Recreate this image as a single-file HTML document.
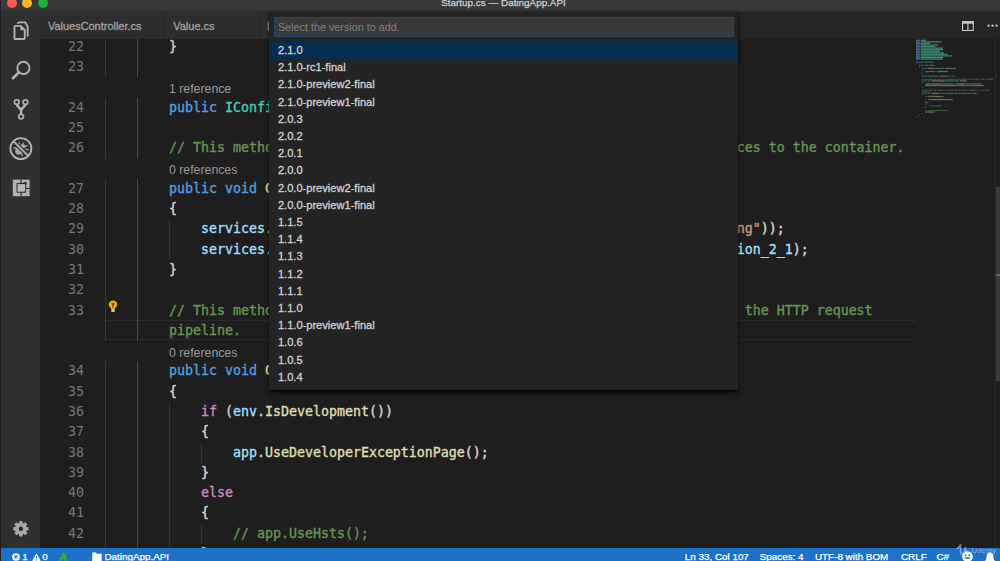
<!DOCTYPE html>
<html lang="en">
<head>
<meta charset="utf-8">
<title>Startup.cs — DatingApp.API</title>
<style>
*{box-sizing:border-box;margin:0;padding:0}
html,body{width:1000px;height:561px;overflow:hidden;background:#1e1e1e}
body{position:relative;font-family:"Liberation Sans",sans-serif;color:#d4d4d4;-webkit-font-smoothing:antialiased}
.abs{position:absolute}
#edge{left:0;top:0;width:1.400px;height:561px;background:#241f1e;z-index:50}
#titlebar{left:0;top:0;width:1000px;height:12px;background:linear-gradient(#3a3a3a 0,#383838 9px,#303030 12px);overflow:hidden}
#titlebar .tl{position:absolute;top:-2.100px;width:10px;height:10px;border-radius:50%}
#title{left:439.5px;top:-4.2px;width:128px;text-align:center;font-size:9.9px;line-height:14px;color:#d2d2d2;white-space:nowrap;-webkit-text-stroke:0.25px #d2d2d2}
#activity{left:1.400px;top:12px;width:38.600px;height:536px;background:#2f2f2f}
#tabs{left:40px;top:12px;width:960px;height:27px;background:#252526}
.tab{position:absolute;top:0;height:27px;background:#2d2d2d;color:#a2a2a2;font-size:10.95px;line-height:28.5px;-webkit-text-stroke:0.3px #a2a2a2;white-space:nowrap;border-right:1px solid #252526}
#editor{left:40px;top:39px;width:960px;height:509px;background:#1e1e1e;overflow:hidden}
.ln{position:absolute;left:0;width:44px;text-align:right;color:#777777;font:13.29px/20.29px "DejaVu Sans Mono","Liberation Mono",monospace;height:20.29px;white-space:pre}
.cl{position:absolute;left:65px;color:#d4d4d4;-webkit-text-stroke-width:0.4px;font:13.29px/20.29px "DejaVu Sans Mono","Liberation Mono",monospace;height:20.29px;white-space:pre}
.lens{position:absolute;left:129px;color:#999999;font:12.3px/20.29px "Liberation Sans",sans-serif;height:20.29px;white-space:pre}
.k{color:#509de0}.t{color:#48ccb2}.c{color:#64944f}.v{color:#9cdcfe}.f{color:#dcdcaa}.p{color:#c586c0}.s{color:#ce9178}
.g{position:absolute;width:1px;background:#404040}
#status{left:0;top:547.7px;width:1000px;height:14px;background:#1b72c8;color:#fff;font-size:9.85px;line-height:17.2px;white-space:nowrap;overflow:hidden;-webkit-text-stroke:0.25px #fff}
#status span{position:absolute;top:0}
#qo{left:269.400px;top:12px;width:468.800px;height:377.600px;background:#242425;box-shadow:0 4px 5px -1.500px rgba(0,0,0,.95),0 0 2.500px rgba(0,0,0,.55);z-index:20}
#qin{left:4.5px;top:4.5px;width:460px;height:20.5px;background:#393939;border:1px solid #1a4a70;color:#808080;font-size:10.8px;line-height:18.5px;padding-left:3px;white-space:nowrap}
.row{position:absolute;left:0;width:468.5px;height:17.2px;padding-left:8.5px;font-size:11.1px;line-height:17.2px;color:#d2d2d2;white-space:nowrap;-webkit-text-stroke:0.3px #d2d2d2}
.row.sel{background:#062e50}
</style>
</head>
<body>
<div id="titlebar" class="abs">
  <div class="tl" style="left:6.5px;background:#fc5b50"></div>
  <div class="tl" style="left:22px;background:#fdb72a"></div>
  <div class="tl" style="left:38px;background:#1cb23a"></div>
  <div id="title" class="abs">Startup.cs — DatingApp.API</div>
</div>
<div id="edge" class="abs"></div>
<div id="activity" class="abs">
<svg class="abs" style="left:0.300px;top:0" width="38.5" height="536" viewBox="0 0 38.5 536" fill="none" stroke="#b2b2b2">
<!-- files -->
<path d="M13.6 13.85H18.6L22.75 18V25.9a1.15 1.15 0 0 1-1.15 1.15H13.6a1.15 1.15 0 0 1-1.15-1.15V15a1.15 1.15 0 0 1 1.15-1.15z" stroke-width="1.9" stroke-linejoin="round"/>
<path d="M18.4 14v4.2h4.2z" fill="#b2b2b2" stroke="none"/>
<path d="M15.6 11.6c0.300-0.800 0.900-1.200 1.700-1.200h5.900l2.450 4.000V24.400" stroke-width="1.900" stroke-linejoin="miter"/>
<!-- search -->
<circle cx="21.4" cy="55.9" r="6.1" stroke-width="1.9"/>
<path d="M16.600 60.700L10.900 66.300" stroke-width="2.700" stroke-linecap="round"/>
<!-- git -->
<circle cx="14.700" cy="90.100" r="2.350" stroke-width="1.700"/>
<circle cx="23.500" cy="90.100" r="2.350" stroke-width="1.700"/>
<circle cx="19.100" cy="104.600" r="2.350" stroke-width="1.700"/>
<path d="M14.900 92.600c0.300 2.400 4.200 3.400 4.200 6.200v3.400M23.300 92.600c-0.300 2.400-4.200 3.400-4.200 6.200" stroke-width="2.500" stroke-linejoin="round"/>
<!-- debug -->
<circle cx="18.870" cy="136.600" r="10.500" stroke-width="1.900"/>
<g stroke="none" fill="#a6a6a6">
<ellipse cx="16.700" cy="138.800" rx="3.500" ry="3.900"/>
<ellipse cx="20.800" cy="134.600" rx="2.600" ry="2.300"/>
</g>
<path d="M11.200 136.500c1.600-1.200 3.000-0.800 4.000 0.200M18.800 141.000c1.600 0.800 1.700 2.200 1.200 3.600M16.800 130.000l0.800 3.200M21.400 130.600l-0.600 2.600M25.400 133.400l-2.600 1.400M26.600 137.800l-3.400-0.600M24.600 141.600l-2.400-1.800" stroke="#a6a6a6" stroke-width="1.200"/>
<path d="M13.000 130.900L24.700 142.300" stroke="#2f2f2f" stroke-width="4.200"/>
<path d="M11.600 129.400L26.100 143.700" stroke-width="1.900"/>
<!-- extensions -->
<g stroke="none">
<rect x="10.800" y="167.600" width="16.800" height="16.600" fill="#b2b2b2"/>
<rect x="18.500" y="167.600" width="1.200" height="16.600" fill="#2f2f2f"/>
<rect x="23.000" y="175.900" width="4.600" height="1.100" fill="#2f2f2f"/>
<rect x="14.500" y="171.100" width="9.600" height="9.600" rx="0.800" fill="#2f2f2f"/>
<rect x="21.600" y="170.100" width="3.000" height="2.600" fill="#2a2a2a"/>
<rect x="15.500" y="172.100" width="7.600" height="7.600" fill="#b8b8b8"/>
</g>
<!-- gear -->
<g transform="translate(18.870 516.700)" stroke="none" fill="#a8a8a8">
<circle r="5.700"/>
<g id="tooth"><path d="M-1.500 -7.700h3l0.500 3h-4z"/></g>
<path d="M-1.500 -7.700h3l0.500 3h-4z" transform="rotate(45)"/>
<path d="M-1.500 -7.700h3l0.500 3h-4z" transform="rotate(90)"/>
<path d="M-1.500 -7.700h3l0.500 3h-4z" transform="rotate(135)"/>
<path d="M-1.500 -7.700h3l0.500 3h-4z" transform="rotate(180)"/>
<path d="M-1.500 -7.700h3l0.500 3h-4z" transform="rotate(225)"/>
<path d="M-1.500 -7.700h3l0.500 3h-4z" transform="rotate(270)"/>
<path d="M-1.500 -7.700h3l0.500 3h-4z" transform="rotate(315)"/>
<circle r="2.200" fill="#2c2c2c"/>
</g>
</svg>
</div>
<div id="tabs" class="abs">
  <div class="tab" style="left:0;width:125px;padding-left:8px">ValuesController.cs</div>
  <div class="tab" style="left:125px;width:94.500px;padding-left:8.300px">Value.cs</div>
  <div class="tab" style="left:219.500px;width:110px;padding-left:7.500px">DataContext.cs</div>

<svg class="abs" style="left:922px;top:8.8px" width="11.800" height="10.200" viewBox="0 0 13 11"><rect x="0.600" y="0.600" width="11.800" height="9.800" fill="none" stroke="#d0d0d0" stroke-width="1.200"/><rect x="0.600" y="0.600" width="11.800" height="2.200" fill="#d0d0d0"/><path d="M6.500 1v9.400" stroke="#d0d0d0" stroke-width="1.200"/></svg>
<svg class="abs" style="left:947px;top:12px" width="12" height="4" viewBox="0 0 12 4"><circle cx="1.500" cy="1.700" r="1.150" fill="#d0d0d0"/><circle cx="5.500" cy="1.700" r="1.150" fill="#d0d0d0"/><circle cx="9.500" cy="1.700" r="1.150" fill="#d0d0d0"/></svg>

</div>
<div id="editor" class="abs"><div class="abs" style="left:65px;top:280.66px;width:811px;height:19.89px;border-top:1.500px solid #2a2a2a;border-bottom:1.500px solid #2a2a2a"></div>
<div class="g" style="left:65.0px;top:-2.20px;height:40.58px;background:#383838"></div>
<div class="g" style="left:97.0px;top:-2.20px;height:40.58px;background:#4a4a4a"></div>
<div class="g" style="left:65.0px;top:58.67px;height:60.87px;background:#383838"></div>
<div class="g" style="left:97.0px;top:58.67px;height:60.87px;background:#4a4a4a"></div>
<div class="g" style="left:65.0px;top:139.83px;height:162.32px;background:#383838"></div>
<div class="g" style="left:97.0px;top:139.83px;height:162.32px;background:#4a4a4a"></div>
<div class="g" style="left:65.0px;top:322.44px;height:202.90px;background:#383838"></div>
<div class="g" style="left:97.0px;top:322.44px;height:202.90px;background:#4a4a4a"></div>
<div class="g" style="left:129.0px;top:180.41px;height:40.58px;background:#333333"></div>
<div class="g" style="left:129.0px;top:363.02px;height:162.32px;background:#333333"></div>
<div class="g" style="left:161.0px;top:403.60px;height:20.29px;background:#333333"></div>
<div class="g" style="left:161.0px;top:484.76px;height:20.29px;background:#333333"></div>
<div class="ln" style="top:-2.20px">22</div>
<div class="cl" style="top:-2.20px">        }</div>
<div class="ln" style="top:18.09px">23</div>
<div class="lens" style="top:39.88px">1 reference</div>
<div class="ln" style="top:58.67px">24</div>
<div class="cl" style="top:58.67px">        <span class="k">public</span> <span class="t">IConfiguration</span> Configuration { <span class="k">get</span>; }</div>
<div class="ln" style="top:78.96px">25</div>
<div class="ln" style="top:99.25px">26</div>
<div class="cl" style="top:99.25px">        <span class="c">// This method gets called by the runtime. Use this method to add services to the container.</span></div>
<div class="lens" style="top:121.04px">0 references</div>
<div class="ln" style="top:139.83px">27</div>
<div class="cl" style="top:139.83px">        <span class="k">public</span> <span class="k">void</span> <span class="f">ConfigureServices</span>(<span class="t">IServiceCollection</span> <span class="v">services</span>)</div>
<div class="ln" style="top:160.12px">28</div>
<div class="cl" style="top:160.12px">        {</div>
<div class="ln" style="top:180.41px">29</div>
<div class="cl" style="top:180.41px">            <span class="v">services</span>.<span class="f">AddDbContext</span>&lt;<span class="t">DataContext</span>&gt;(<span class="v">x</span> =&gt; <span class="v">x</span>.<span class="f">UseSqlite</span>(<span class="s">"ConnectionString"</span>));</div>
<div class="ln" style="top:200.70px">30</div>
<div class="cl" style="top:200.70px">            <span class="v">services</span>.<span class="f">AddMvc</span>().<span class="f">SetCompatibilityVersion</span>(<span class="t">CompatibilityVersion</span>.<span class="v">Version_2_1</span>);</div>
<div class="ln" style="top:220.99px">31</div>
<div class="cl" style="top:220.99px">        }</div>
<div class="ln" style="top:241.28px">32</div>
<div class="ln" style="top:261.57px">33</div>
<div class="cl" style="top:261.57px">        <span class="c">// This method gets called by the runtime. Use this method to configure the HTTP request </span></div>
<div class="cl" style="top:281.86px">        <span class="c">pipeline.</span></div>
<div class="lens" style="top:303.65px">0 references</div>
<div class="ln" style="top:322.44px">34</div>
<div class="cl" style="top:322.44px">        <span class="k">public</span> <span class="k">void</span> <span class="f">Configure</span>(<span class="t">IApplicationBuilder</span> <span class="v">app</span>, <span class="t">IHostingEnvironment</span> <span class="v">env</span>)</div>
<div class="ln" style="top:342.73px">35</div>
<div class="cl" style="top:342.73px">        {</div>
<div class="ln" style="top:363.02px">36</div>
<div class="cl" style="top:363.02px">            <span class="p">if</span> (<span class="v">env</span>.<span class="f">IsDevelopment</span>())</div>
<div class="ln" style="top:383.31px">37</div>
<div class="cl" style="top:383.31px">            {</div>
<div class="ln" style="top:403.60px">38</div>
<div class="cl" style="top:403.60px">                <span class="v">app</span>.<span class="f">UseDeveloperExceptionPage</span>();</div>
<div class="ln" style="top:423.89px">39</div>
<div class="cl" style="top:423.89px">            }</div>
<div class="ln" style="top:444.18px">40</div>
<div class="cl" style="top:444.18px">            <span class="p">else</span></div>
<div class="ln" style="top:464.47px">41</div>
<div class="cl" style="top:464.47px">            {</div>
<div class="ln" style="top:484.76px">42</div>
<div class="cl" style="top:484.76px">                <span class="c">// app.UseHsts();</span></div>
<div class="ln" style="top:505.05px">43</div>
<div class="cl" style="top:505.05px">            }</div>
<svg class="abs" style="left:68.400px;top:260.600px" width="10" height="13" viewBox="0 0 10 13"><path d="M5 0.400C2.500 0.400 0.700 2.200 0.700 4.400c0 1.500 0.800 2.300 1.500 3.200 0.500 0.600 0.800 1 0.900 1.500h3.800c0.100-0.500 0.400-0.900 0.900-1.500 0.700-0.900 1.500-1.700 1.500-3.200C9.300 2.200 7.500 0.400 5 0.400z" fill="#e6a91e"/><path d="M3.300 3.300h3.400L5 6.400z" fill="#4a3300"/><path d="M5 5.600v2.600" stroke="#7a5800" stroke-width="0.800"/><rect x="3.300" y="9.100" width="3.400" height="3" rx="0.500" fill="#c4c4c4"/></svg>
<svg class="abs" style="left:876.3px;top:0" width="80" height="90" viewBox="0 0 80 90"><rect x="0.00" y="0.70" width="3.85" height="1.25" fill="#569cd6" opacity="0.62"/><rect x="4.62" y="0.70" width="4.62" height="1.25" fill="#4ec9b0" opacity="0.62"/><rect x="9.24" y="0.70" width="0.77" height="1.25" fill="#d4d4d4" opacity="0.50"/><rect x="0.00" y="2.26" width="3.85" height="1.25" fill="#569cd6" opacity="0.62"/><rect x="4.62" y="2.26" width="20.02" height="1.25" fill="#4ec9b0" opacity="0.62"/><rect x="24.64" y="2.26" width="0.77" height="1.25" fill="#d4d4d4" opacity="0.50"/><rect x="0.00" y="3.82" width="3.85" height="1.25" fill="#569cd6" opacity="0.62"/><rect x="4.62" y="3.82" width="8.47" height="1.25" fill="#4ec9b0" opacity="0.62"/><rect x="13.09" y="3.82" width="0.77" height="1.25" fill="#d4d4d4" opacity="0.50"/><rect x="0.00" y="5.38" width="3.85" height="1.25" fill="#569cd6" opacity="0.62"/><rect x="4.62" y="5.38" width="16.94" height="1.25" fill="#4ec9b0" opacity="0.62"/><rect x="21.56" y="5.38" width="0.77" height="1.25" fill="#d4d4d4" opacity="0.50"/><rect x="0.00" y="6.94" width="3.85" height="1.25" fill="#569cd6" opacity="0.62"/><rect x="4.62" y="6.94" width="13.86" height="1.25" fill="#4ec9b0" opacity="0.62"/><rect x="18.48" y="6.94" width="0.77" height="1.25" fill="#d4d4d4" opacity="0.50"/><rect x="0.00" y="8.50" width="3.85" height="1.25" fill="#569cd6" opacity="0.62"/><rect x="4.62" y="8.50" width="21.56" height="1.25" fill="#4ec9b0" opacity="0.62"/><rect x="26.18" y="8.50" width="0.77" height="1.25" fill="#d4d4d4" opacity="0.50"/><rect x="0.00" y="10.06" width="3.85" height="1.25" fill="#569cd6" opacity="0.62"/><rect x="4.62" y="10.06" width="21.56" height="1.25" fill="#4ec9b0" opacity="0.62"/><rect x="26.18" y="10.06" width="0.77" height="1.25" fill="#d4d4d4" opacity="0.50"/><rect x="0.00" y="11.62" width="3.85" height="1.25" fill="#569cd6" opacity="0.62"/><rect x="4.62" y="11.62" width="18.48" height="1.25" fill="#4ec9b0" opacity="0.62"/><rect x="23.10" y="11.62" width="0.77" height="1.25" fill="#d4d4d4" opacity="0.50"/><rect x="0.00" y="13.18" width="3.85" height="1.25" fill="#569cd6" opacity="0.62"/><rect x="4.62" y="13.18" width="22.33" height="1.25" fill="#4ec9b0" opacity="0.62"/><rect x="26.95" y="13.18" width="0.77" height="1.25" fill="#d4d4d4" opacity="0.50"/><rect x="0.00" y="14.74" width="3.85" height="1.25" fill="#569cd6" opacity="0.62"/><rect x="4.62" y="14.74" width="26.18" height="1.25" fill="#4ec9b0" opacity="0.62"/><rect x="30.80" y="14.74" width="0.77" height="1.25" fill="#d4d4d4" opacity="0.50"/><rect x="0.00" y="16.30" width="3.85" height="1.25" fill="#569cd6" opacity="0.62"/><rect x="4.62" y="16.30" width="30.80" height="1.25" fill="#4ec9b0" opacity="0.62"/><rect x="35.42" y="16.30" width="0.77" height="1.25" fill="#d4d4d4" opacity="0.50"/><rect x="0.00" y="17.86" width="3.85" height="1.25" fill="#569cd6" opacity="0.62"/><rect x="4.62" y="17.86" width="21.56" height="1.25" fill="#4ec9b0" opacity="0.62"/><rect x="26.18" y="17.86" width="0.77" height="1.25" fill="#d4d4d4" opacity="0.50"/><rect x="0.00" y="19.42" width="3.85" height="1.25" fill="#569cd6" opacity="0.62"/><rect x="4.62" y="19.42" width="21.56" height="1.25" fill="#4ec9b0" opacity="0.62"/><rect x="26.18" y="19.42" width="0.77" height="1.25" fill="#d4d4d4" opacity="0.50"/><rect x="0.00" y="22.54" width="6.93" height="1.25" fill="#569cd6" opacity="0.42"/><rect x="7.70" y="22.54" width="10.01" height="1.25" fill="#4ec9b0" opacity="0.42"/><rect x="0.00" y="24.10" width="0.77" height="1.25" fill="#d4d4d4" opacity="0.34"/><rect x="3.08" y="25.66" width="4.62" height="1.25" fill="#569cd6" opacity="0.42"/><rect x="8.47" y="25.66" width="3.85" height="1.25" fill="#569cd6" opacity="0.42"/><rect x="13.09" y="25.66" width="5.39" height="1.25" fill="#4ec9b0" opacity="0.42"/><rect x="3.08" y="27.22" width="0.77" height="1.25" fill="#d4d4d4" opacity="0.34"/><rect x="6.16" y="28.78" width="4.62" height="1.25" fill="#569cd6" opacity="0.42"/><rect x="11.55" y="28.78" width="5.39" height="1.25" fill="#dcdcaa" opacity="0.42"/><rect x="16.94" y="28.78" width="0.77" height="1.25" fill="#d4d4d4" opacity="0.34"/><rect x="17.71" y="28.78" width="10.78" height="1.25" fill="#4ec9b0" opacity="0.42"/><rect x="29.26" y="28.78" width="10.01" height="1.25" fill="#9cdcfe" opacity="0.42"/><rect x="39.27" y="28.78" width="0.77" height="1.25" fill="#d4d4d4" opacity="0.34"/><rect x="6.16" y="30.34" width="0.77" height="1.25" fill="#d4d4d4" opacity="0.34"/><rect x="9.24" y="31.90" width="10.01" height="1.25" fill="#d4d4d4" opacity="0.34"/><rect x="20.02" y="31.90" width="0.77" height="1.25" fill="#d4d4d4" opacity="0.34"/><rect x="21.56" y="31.90" width="10.01" height="1.25" fill="#9cdcfe" opacity="0.42"/><rect x="31.57" y="31.90" width="0.77" height="1.25" fill="#d4d4d4" opacity="0.34"/><rect x="6.16" y="33.46" width="0.77" height="1.25" fill="#d4d4d4" opacity="0.34"/><rect x="6.16" y="36.58" width="4.62" height="1.25" fill="#569cd6" opacity="0.42"/><rect x="11.55" y="36.58" width="10.78" height="1.25" fill="#4ec9b0" opacity="0.42"/><rect x="23.10" y="36.58" width="10.01" height="1.25" fill="#d4d4d4" opacity="0.34"/><rect x="33.88" y="36.58" width="0.77" height="1.25" fill="#d4d4d4" opacity="0.34"/><rect x="35.42" y="36.58" width="2.31" height="1.25" fill="#569cd6" opacity="0.42"/><rect x="37.73" y="36.58" width="0.77" height="1.25" fill="#d4d4d4" opacity="0.34"/><rect x="39.27" y="36.58" width="0.77" height="1.25" fill="#d4d4d4" opacity="0.34"/><rect x="6.16" y="39.70" width="1.54" height="1.25" fill="#6a9955" opacity="0.42"/><rect x="8.47" y="39.70" width="3.08" height="1.25" fill="#6a9955" opacity="0.42"/><rect x="12.32" y="39.70" width="4.62" height="1.25" fill="#6a9955" opacity="0.42"/><rect x="17.71" y="39.70" width="3.08" height="1.25" fill="#6a9955" opacity="0.42"/><rect x="21.56" y="39.70" width="4.62" height="1.25" fill="#6a9955" opacity="0.42"/><rect x="26.95" y="39.70" width="1.54" height="1.25" fill="#6a9955" opacity="0.42"/><rect x="29.26" y="39.70" width="2.31" height="1.25" fill="#6a9955" opacity="0.42"/><rect x="32.34" y="39.70" width="6.16" height="1.25" fill="#6a9955" opacity="0.42"/><rect x="39.27" y="39.70" width="2.31" height="1.25" fill="#6a9955" opacity="0.42"/><rect x="42.35" y="39.70" width="3.08" height="1.25" fill="#6a9955" opacity="0.42"/><rect x="46.20" y="39.70" width="4.62" height="1.25" fill="#6a9955" opacity="0.42"/><rect x="51.59" y="39.70" width="1.54" height="1.25" fill="#6a9955" opacity="0.42"/><rect x="53.90" y="39.70" width="2.31" height="1.25" fill="#6a9955" opacity="0.42"/><rect x="56.98" y="39.70" width="6.16" height="1.25" fill="#6a9955" opacity="0.42"/><rect x="63.91" y="39.70" width="1.54" height="1.25" fill="#6a9955" opacity="0.42"/><rect x="66.22" y="39.70" width="2.31" height="1.25" fill="#6a9955" opacity="0.42"/><rect x="69.30" y="39.70" width="7.70" height="1.25" fill="#6a9955" opacity="0.42"/><rect x="6.16" y="41.26" width="4.62" height="1.25" fill="#569cd6" opacity="0.42"/><rect x="11.55" y="41.26" width="3.08" height="1.25" fill="#569cd6" opacity="0.42"/><rect x="15.40" y="41.26" width="13.09" height="1.25" fill="#dcdcaa" opacity="0.42"/><rect x="28.49" y="41.26" width="0.77" height="1.25" fill="#d4d4d4" opacity="0.34"/><rect x="29.26" y="41.26" width="13.86" height="1.25" fill="#4ec9b0" opacity="0.42"/><rect x="43.89" y="41.26" width="6.16" height="1.25" fill="#9cdcfe" opacity="0.42"/><rect x="50.05" y="41.26" width="0.77" height="1.25" fill="#d4d4d4" opacity="0.34"/><rect x="6.16" y="42.82" width="0.77" height="1.25" fill="#d4d4d4" opacity="0.34"/><rect x="9.24" y="44.38" width="6.16" height="1.25" fill="#9cdcfe" opacity="0.42"/><rect x="15.40" y="44.38" width="0.77" height="1.25" fill="#d4d4d4" opacity="0.34"/><rect x="16.17" y="44.38" width="9.24" height="1.25" fill="#dcdcaa" opacity="0.42"/><rect x="25.41" y="44.38" width="0.77" height="1.25" fill="#d4d4d4" opacity="0.34"/><rect x="26.18" y="44.38" width="8.47" height="1.25" fill="#4ec9b0" opacity="0.42"/><rect x="34.65" y="44.38" width="1.54" height="1.25" fill="#d4d4d4" opacity="0.34"/><rect x="36.19" y="44.38" width="0.77" height="1.25" fill="#9cdcfe" opacity="0.42"/><rect x="37.73" y="44.38" width="1.54" height="1.25" fill="#d4d4d4" opacity="0.34"/><rect x="40.04" y="44.38" width="0.77" height="1.25" fill="#9cdcfe" opacity="0.42"/><rect x="40.81" y="44.38" width="0.77" height="1.25" fill="#d4d4d4" opacity="0.34"/><rect x="41.58" y="44.38" width="6.93" height="1.25" fill="#dcdcaa" opacity="0.42"/><rect x="48.51" y="44.38" width="0.77" height="1.25" fill="#d4d4d4" opacity="0.34"/><rect x="49.28" y="44.38" width="13.86" height="1.25" fill="#ce9178" opacity="0.42"/><rect x="63.14" y="44.38" width="2.31" height="1.25" fill="#d4d4d4" opacity="0.34"/><rect x="9.24" y="45.94" width="6.16" height="1.25" fill="#9cdcfe" opacity="0.42"/><rect x="15.40" y="45.94" width="0.77" height="1.25" fill="#d4d4d4" opacity="0.34"/><rect x="16.17" y="45.94" width="4.62" height="1.25" fill="#dcdcaa" opacity="0.42"/><rect x="20.79" y="45.94" width="2.31" height="1.25" fill="#d4d4d4" opacity="0.34"/><rect x="23.10" y="45.94" width="17.71" height="1.25" fill="#dcdcaa" opacity="0.42"/><rect x="40.81" y="45.94" width="0.77" height="1.25" fill="#d4d4d4" opacity="0.34"/><rect x="41.58" y="45.94" width="15.40" height="1.25" fill="#4ec9b0" opacity="0.42"/><rect x="56.98" y="45.94" width="0.77" height="1.25" fill="#d4d4d4" opacity="0.34"/><rect x="57.75" y="45.94" width="8.47" height="1.25" fill="#9cdcfe" opacity="0.42"/><rect x="66.22" y="45.94" width="1.54" height="1.25" fill="#d4d4d4" opacity="0.34"/><rect x="6.16" y="47.50" width="0.77" height="1.25" fill="#d4d4d4" opacity="0.34"/><rect x="6.16" y="50.62" width="1.54" height="1.25" fill="#6a9955" opacity="0.42"/><rect x="8.47" y="50.62" width="3.08" height="1.25" fill="#6a9955" opacity="0.42"/><rect x="12.32" y="50.62" width="4.62" height="1.25" fill="#6a9955" opacity="0.42"/><rect x="17.71" y="50.62" width="3.08" height="1.25" fill="#6a9955" opacity="0.42"/><rect x="21.56" y="50.62" width="4.62" height="1.25" fill="#6a9955" opacity="0.42"/><rect x="26.95" y="50.62" width="1.54" height="1.25" fill="#6a9955" opacity="0.42"/><rect x="29.26" y="50.62" width="2.31" height="1.25" fill="#6a9955" opacity="0.42"/><rect x="32.34" y="50.62" width="6.16" height="1.25" fill="#6a9955" opacity="0.42"/><rect x="39.27" y="50.62" width="2.31" height="1.25" fill="#6a9955" opacity="0.42"/><rect x="42.35" y="50.62" width="3.08" height="1.25" fill="#6a9955" opacity="0.42"/><rect x="46.20" y="50.62" width="4.62" height="1.25" fill="#6a9955" opacity="0.42"/><rect x="51.59" y="50.62" width="1.54" height="1.25" fill="#6a9955" opacity="0.42"/><rect x="53.90" y="50.62" width="6.93" height="1.25" fill="#6a9955" opacity="0.42"/><rect x="61.60" y="50.62" width="2.31" height="1.25" fill="#6a9955" opacity="0.42"/><rect x="64.68" y="50.62" width="3.08" height="1.25" fill="#6a9955" opacity="0.42"/><rect x="68.53" y="50.62" width="5.39" height="1.25" fill="#6a9955" opacity="0.42"/><rect x="6.16" y="52.18" width="6.93" height="1.25" fill="#6a9955" opacity="0.42"/><rect x="6.16" y="53.74" width="4.62" height="1.25" fill="#569cd6" opacity="0.42"/><rect x="11.55" y="53.74" width="3.08" height="1.25" fill="#569cd6" opacity="0.42"/><rect x="15.40" y="53.74" width="6.93" height="1.25" fill="#dcdcaa" opacity="0.42"/><rect x="22.33" y="53.74" width="0.77" height="1.25" fill="#d4d4d4" opacity="0.34"/><rect x="23.10" y="53.74" width="14.63" height="1.25" fill="#4ec9b0" opacity="0.42"/><rect x="38.50" y="53.74" width="2.31" height="1.25" fill="#9cdcfe" opacity="0.42"/><rect x="40.81" y="53.74" width="0.77" height="1.25" fill="#d4d4d4" opacity="0.34"/><rect x="42.35" y="53.74" width="14.63" height="1.25" fill="#4ec9b0" opacity="0.42"/><rect x="57.75" y="53.74" width="2.31" height="1.25" fill="#9cdcfe" opacity="0.42"/><rect x="60.06" y="53.74" width="0.77" height="1.25" fill="#d4d4d4" opacity="0.34"/><rect x="6.16" y="55.30" width="0.77" height="1.25" fill="#d4d4d4" opacity="0.34"/><rect x="9.24" y="56.86" width="1.54" height="1.25" fill="#c586c0" opacity="0.42"/><rect x="11.55" y="56.86" width="0.77" height="1.25" fill="#d4d4d4" opacity="0.34"/><rect x="12.32" y="56.86" width="2.31" height="1.25" fill="#9cdcfe" opacity="0.42"/><rect x="14.63" y="56.86" width="0.77" height="1.25" fill="#d4d4d4" opacity="0.34"/><rect x="15.40" y="56.86" width="10.01" height="1.25" fill="#dcdcaa" opacity="0.42"/><rect x="25.41" y="56.86" width="2.31" height="1.25" fill="#d4d4d4" opacity="0.34"/><rect x="9.24" y="58.42" width="0.77" height="1.25" fill="#d4d4d4" opacity="0.34"/><rect x="12.32" y="59.98" width="2.31" height="1.25" fill="#9cdcfe" opacity="0.42"/><rect x="14.63" y="59.98" width="0.77" height="1.25" fill="#d4d4d4" opacity="0.34"/><rect x="15.40" y="59.98" width="19.25" height="1.25" fill="#dcdcaa" opacity="0.42"/><rect x="34.65" y="59.98" width="2.31" height="1.25" fill="#d4d4d4" opacity="0.34"/><rect x="9.24" y="61.54" width="0.77" height="1.25" fill="#d4d4d4" opacity="0.34"/><rect x="9.24" y="63.10" width="3.08" height="1.25" fill="#c586c0" opacity="0.42"/><rect x="9.24" y="64.66" width="0.77" height="1.25" fill="#d4d4d4" opacity="0.34"/><rect x="12.32" y="66.22" width="1.54" height="1.25" fill="#6a9955" opacity="0.42"/><rect x="14.63" y="66.22" width="10.78" height="1.25" fill="#6a9955" opacity="0.42"/><rect x="9.24" y="67.78" width="0.77" height="1.25" fill="#d4d4d4" opacity="0.34"/><rect x="9.24" y="70.90" width="1.54" height="1.25" fill="#6a9955" opacity="0.42"/><rect x="11.55" y="70.90" width="20.02" height="1.25" fill="#6a9955" opacity="0.42"/><rect x="9.24" y="72.46" width="2.31" height="1.25" fill="#9cdcfe" opacity="0.42"/><rect x="11.55" y="72.46" width="0.77" height="1.25" fill="#d4d4d4" opacity="0.34"/><rect x="12.32" y="72.46" width="4.62" height="1.25" fill="#dcdcaa" opacity="0.42"/><rect x="16.94" y="72.46" width="2.31" height="1.25" fill="#d4d4d4" opacity="0.34"/><rect x="6.16" y="74.02" width="0.77" height="1.25" fill="#d4d4d4" opacity="0.34"/><rect x="3.08" y="75.58" width="0.77" height="1.25" fill="#d4d4d4" opacity="0.34"/><rect x="0.00" y="77.14" width="0.77" height="1.25" fill="#d4d4d4" opacity="0.34"/></svg>
<div class="abs" style="left:955px;top:0;width:1px;height:509px;background:#2a2a2a"></div>
<div class="abs" style="left:955.5px;top:148px;width:5px;height:194px;background:#3a3a3a"></div>
<div class="abs" style="left:955.5px;top:235px;width:5px;height:1.5px;background:#6a6a6a"></div></div>
<div id="qo" class="abs">
  <div id="qin" class="abs">Select the version to add.</div>
<div class="row sel" style="top:29.90px">2.1.0</div>
<div class="row" style="top:47.10px">2.1.0-rc1-final</div>
<div class="row" style="top:64.30px">2.1.0-preview2-final</div>
<div class="row" style="top:81.50px">2.1.0-preview1-final</div>
<div class="row" style="top:98.70px">2.0.3</div>
<div class="row" style="top:115.90px">2.0.2</div>
<div class="row" style="top:133.10px">2.0.1</div>
<div class="row" style="top:150.30px">2.0.0</div>
<div class="row" style="top:167.50px">2.0.0-preview2-final</div>
<div class="row" style="top:184.70px">2.0.0-preview1-final</div>
<div class="row" style="top:201.90px">1.1.5</div>
<div class="row" style="top:219.10px">1.1.4</div>
<div class="row" style="top:236.30px">1.1.3</div>
<div class="row" style="top:253.50px">1.1.2</div>
<div class="row" style="top:270.70px">1.1.1</div>
<div class="row" style="top:287.90px">1.1.0</div>
<div class="row" style="top:305.10px">1.1.0-preview1-final</div>
<div class="row" style="top:322.30px">1.0.6</div>
<div class="row" style="top:339.50px">1.0.5</div>
<div class="row" style="top:356.70px">1.0.4</div>
</div>
<div id="status" class="abs">
<svg class="abs" style="left:11.5px;top:5.2px" width="8" height="8" viewBox="0 0 10 10"><circle cx="5" cy="5" r="4.8" fill="#fff"/><path d="M3.1 3.1l3.8 3.8M6.9 3.1L3.100 6.900" stroke="#1b72c8" stroke-width="1.500"/></svg>
<span style="left:22.300px">1</span>
<svg class="abs" style="left:31.500px;top:5px" width="9" height="8.500" viewBox="0 0 11 10"><path d="M5.500 0.200L10.900 9.900H0.100z" fill="#fff"/><path d="M5.500 3.400v3.400M5.500 7.600v1.300" stroke="#1b72c8" stroke-width="1.300"/></svg>
<span style="left:42.300px">0</span>
<svg class="abs" style="left:59.300px;top:4px" width="8.300" height="11" viewBox="0 0 9 12"><path d="M4.800 0.300C5.600 2.600 8.600 4.400 8.600 7.800c0 2.400-1.800 4-4.100 4S0.400 10.200 0.400 8c0-1.600 0.800-2.600 1.600-3.600 0.200 1 0.600 1.600 1.200 2C3 4.200 3.600 1.800 4.800 0.300z" fill="#2fb344"/><path d="M4.500 11.800c-1 0-1.800-0.800-1.800-1.900 0-1.100 1-1.700 1.700-2.900 0.900 1.200 1.900 1.800 1.900 2.900 0 1.100-0.800 1.900-1.800 1.900z" fill="#1b72c8"/></svg>
<svg class="abs" style="left:92px;top:4.600px" width="10" height="9" viewBox="0 0 11 10"><path d="M0.300 0.600h4l1 1.300h5.400v8H0.300z" fill="#fff"/></svg>
<span style="left:104.500px">DatingApp.API</span>
<span style="left:684.800px">Ln 33, Col 107</span>
<span style="left:759.800px">Spaces: 4</span>
<span style="left:815px">UTF-8 with BOM</span>
<span style="left:901px">CRLF</span>
<span style="left:936.500px">C#</span>
<svg class="abs" style="left:962.200px;top:3.500px" width="11" height="11" viewBox="0 0 12 12"><circle cx="6" cy="6" r="5.800" fill="#fff"/><circle cx="4" cy="4.600" r="1" fill="#1b72c8"/><circle cx="8" cy="4.600" r="1" fill="#1b72c8"/><path d="M2.600 6.800c0.600 2.600 6.200 2.600 6.800 0z" fill="#1b72c8"/></svg>
<svg class="abs" style="left:984.800px;top:4.300px" width="10" height="11" viewBox="0 0 10 11"><path d="M5 0.400c-2.200 0-3.400 1.600-3.400 3.800 0 2.400-0.600 3.400-1.400 4.400v0.600h9.600v-0.600c-0.800-1-1.400-2-1.400-4.400C8.400 2 7.200 0.400 5 0.400z" fill="#fff"/><path d="M3.800 9.800a1.200 1.200 0 0 0 2.400 0z" fill="#fff"/></svg>
</div>
<div id="wm" class="abs" style="left:955px;top:542px;width:45px;height:16px;z-index:60;opacity:.5">
<svg class="abs" style="left:0;top:0" width="14" height="15" viewBox="0 0 14 15" fill="none" stroke="#dfe6f0" stroke-width="1.5" stroke-linecap="round"><path d="M1.800 6.600c1.600-0.600 3.200-2 3.800-4.400 0 3.400-0.600 6.400 0.400 9.200 0.600 1.400 2 1.200 2.800-0.200 1-1.800 1.400-4 1.600-6.200 0 2 0.200 4.200 1.800 4.600"/></svg>
<span class="abs" style="left:16.500px;top:4.200px;font-size:7.600px;line-height:9px;color:#e6ecf5;letter-spacing:.1px">Udemy</span>
</div>
</body>
</html>
